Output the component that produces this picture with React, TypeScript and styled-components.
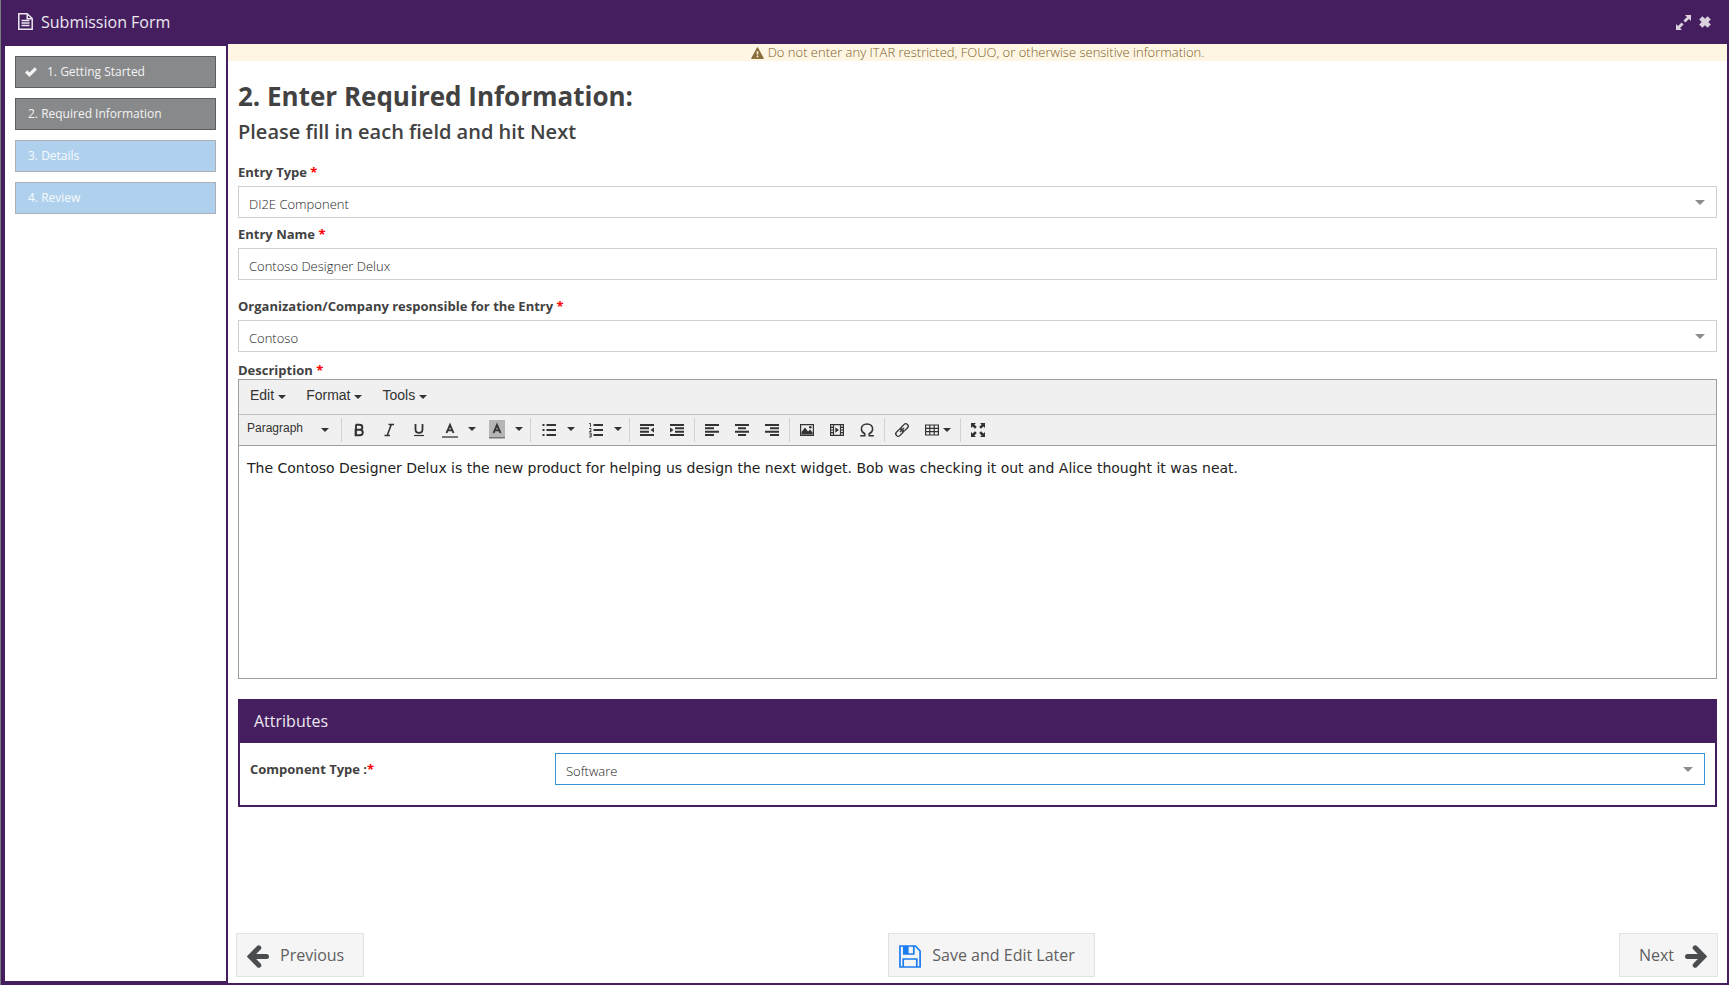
import React from "react";
import styled, { createGlobalStyle, css } from "styled-components";

const purple = "#451e5f";
const sans = '"Open Sans", "Liberation Sans", sans-serif';
const arial = '"Liberation Sans", sans-serif';

const GlobalStyle = createGlobalStyle`
  *, *::before, *::after { box-sizing: border-box; }
  body { margin: 0; background: #7c7c7e; font-family: ${sans}; font-size: 13px; color: #424242; }
  button, input, select, textarea { font: inherit; color: inherit; margin: 0; border-radius: 0; }
  button { cursor: pointer; }
  svg { display: block; flex: none; }
`;

const Window = styled.div`
  display: flex;
  flex-direction: column;
  min-height: 100vh;
  margin-left: 1px;
  background: #fff;
  border: 2px solid ${purple};
  border-top: 0;
`;

const TitleBar = styled.header`
  display: flex;
  align-items: center;
  gap: 8px;
  height: 44px;
  padding: 0 16px 0 15px;
  background: ${purple};
  color: #ece8ef;
`;

const Title = styled.h1`
  flex: 1;
  margin: 0;
  font-size: 16px;
  line-height: 22px;
  font-weight: 400;
`;

const ToolButton = styled.button`
  padding: 0;
  border: 0;
  background: none;
  color: #dad2df;
`;

const Body = styled.div`
  display: flex;
  flex: 1;
`;

const Sidebar = styled.nav`
  display: flex;
  flex-direction: column;
  flex: none;
  gap: 10px;
  width: 225px;
  padding: 10px;
  border: 2px solid ${purple};
`;

const StepButton = styled.button<{ $reached?: boolean; $done?: boolean }>`
  display: flex;
  align-items: center;
  gap: 10px;
  height: 32px;
  padding: 0 ${(p) => (p.$done ? 9 : 12)}px;
  border: 1px solid ${(p) => (p.$reached ? "#5d5e61" : "#aab0b6")};
  background: ${(p) => (p.$reached ? "#88898b" : "#afd1ee")};
  color: ${(p) => (p.$reached ? "#f3f3f3" : "#f7fafd")};
  font-size: 12px;
  line-height: 18px;
  text-align: left;
`;

const Main = styled.main`
  display: flex;
  flex: 1;
  flex-direction: column;
  min-width: 0;
`;

const Warning = styled.p`
  display: flex;
  align-items: center;
  justify-content: center;
  gap: 4px;
  margin: 0;
  background: #fef6e3;
  color: #7d5c2a;
  font-weight: 300;
  line-height: 17px;
`;

const Form = styled.form`
  flex: 1;
  padding: 17px 10px 20px;
`;

const Heading = styled.h2`
  margin: 0 0 4px;
  font-size: 26px;
  line-height: 36px;
  font-weight: 700;
`;

const SubHeading = styled.h3`
  margin: 0 0 18px;
  font-size: 20px;
  line-height: 27px;
  font-weight: 600;
`;

const Field = styled.div<{ $gap?: number; $after?: number }>`
  display: flex;
  flex-direction: column;
  gap: ${(p) => p.$gap ?? 5}px;
  margin-bottom: ${(p) => p.$after ?? 7}px;
`;

const Label = styled.label`
  font-weight: 700;
  line-height: 18px;
`;

const Star = styled.span`
  color: #f00;
`;

const control = css`
  width: 100%;
  height: 32px;
  padding: 4px 10px 0 10px;
  border: 1px solid #cfcfcf;
  background: #fff;
  color: #1c1c1c;
  font-weight: 300;
  outline: 0;
`;

const TextInput = styled.input`
  ${control}
`;

const SelectInput = styled.select<{ $focused?: boolean }>`
  ${control}
  grid-area: 1 / 1;
  appearance: none;
  border-color: ${(p) => (p.$focused ? "#3892d3" : "#cfcfcf")};
`;

const SelectWrap = styled.div`
  display: grid;
  flex: 1;
  align-items: center;

  svg {
    grid-area: 1 / 1;
    justify-self: end;
    margin-right: 12px;
    pointer-events: none;
  }
`;

const Editor = styled.div`
  display: flex;
  flex-direction: column;
  border: 1px solid #9e9e9e;
`;

const MenuBar = styled.div`
  display: flex;
  gap: 20px;
  height: 35px;
  padding: 6px 11px;
  border-bottom: 1px solid #c0c0c0;
  background: #f0f0f0;
  font-family: ${arial};
  font-size: 14px;
  line-height: 18px;
  color: #333;
`;

const MenuButton = styled.button`
  display: flex;
  align-items: center;
  gap: 4px;
  height: 18px;
  padding: 0;
  border: 0;
  background: none;

  svg {
    margin-top: 4px;
  }
`;

const Toolbar = styled.div`
  display: flex;
  align-items: center;
  height: 31px;
  border-bottom: 1px solid #9e9e9e;
  background: #f0f0f0;
  color: #333;
`;

const Group = styled.div`
  display: flex;
  align-items: center;
  height: 24px;
  padding: 0 2px;

  & + & {
    border-left: 1px solid #d2d2d2;
  }
`;

const FormatButton = styled.button`
  display: flex;
  align-items: center;
  justify-content: space-between;
  width: 98px;
  padding: 0 10px 0 6px;
  border: 0;
  background: none;
  font-family: ${arial};
  font-size: 12px;
  line-height: 16px;

  span {
    padding-bottom: 4px;
  }
`;

const IconButton = styled.button<{ $width?: number }>`
  display: flex;
  align-items: center;
  gap: 3px;
  width: ${(p) => p.$width ?? 30}px;
  height: 24px;
  padding: 0 0 0 7px;
  border: 0;
  background: none;
`;

const SplitButton = styled.span`
  display: flex;

  ${IconButton} {
    width: 31px;
    padding-left: 8px;
  }
`;

const OpenButton = styled.button`
  display: flex;
  align-items: center;
  justify-content: center;
  width: 16px;
  height: 24px;
  padding: 0 2px 2px 0;
  border: 0;
  background: none;
`;

const TextArea = styled.textarea`
  display: block;
  width: 100%;
  height: 232px;
  padding: 12px 8px;
  border: 0;
  outline: 0;
  resize: none;
  background: #fff;
  color: #222;
  font-family: "DejaVu Sans", sans-serif;
  font-size: 14px;
  line-height: 20px;
`;

const Panel = styled.section`
  margin-top: 20px;
  border: 2px solid ${purple};
`;

const PanelTitle = styled.h4`
  margin: 0;
  padding: 9px 14px 11px;
  background: ${purple};
  color: #ece8ef;
  font-size: 16px;
  line-height: 22px;
  font-weight: 400;
`;

const PanelRow = styled.div`
  display: flex;
  align-items: center;
  padding: 10px 10px 20px;

  label {
    width: 305px;
  }
`;

const Footer = styled.footer`
  display: flex;
  justify-content: space-between;
  padding: 0 9px 6px 8px;
`;

const NavButton = styled.button<{ $end?: boolean }>`
  display: flex;
  align-items: center;
  gap: 11px;
  height: 44px;
  padding: ${(p) => (p.$end ? "0 10px 0 19px" : "0 19px 0 10px")};
  border: 1px solid #e2e2e2;
  background: #f5f5f5;
  color: #606060;
  font-size: 16px;
  line-height: 22px;

  svg {
    margin-top: 2px;
  }
`;

const Caret = () => (
  <svg width="8" height="4" viewBox="0 0 8 4"><path d="M0 0h8L4 4z" fill="#333" /></svg>
);

const FieldArrow = () => (
  <svg width="10" height="5" viewBox="0 0 10 5"><path d="M0 0h10L5 5z" fill="#8c8c8c" /></svg>
);

const FileIcon = () => (
  <svg width="15" height="18" viewBox="0 0 15 18" fill="none" stroke="currentColor" strokeWidth="1.5">
    <path d="M.8.8h8.400l5 4.700v10.700H.8zM9.200.8v4.900h5" />
    <path d="M3.500 7.500h8M3.500 10h8M3.500 12.500h8" strokeWidth="1.300" />
  </svg>
);

const ExpandIcon = () => (
  <svg width="15" height="15" viewBox="0 0 15 15" fill="currentColor">
    <path d="M9 0h6v6l-2-2-3.600 3.600-2-2L11 2zM0 15V9l2 2 3.600-3.600 2 2L4 13l2 2z" />
  </svg>
);

const CloseIcon = () => (
  <svg width="12" height="12" viewBox="0 0 12 12" stroke="currentColor" strokeWidth="4.600">
    <path d="M1.800 1.800l8.400 8.400M10.200 1.800l-8.400 8.400" />
  </svg>
);

const CheckIcon = () => (
  <svg width="12" height="10" viewBox="0 0 12 10" fill="none" stroke="currentColor" strokeWidth="3.200">
    <path d="M1.100 4.500l3.400 3.200 6.400-6.400" />
  </svg>
);

const WarningIcon = () => (
  <svg width="13" height="12" viewBox="0 0 13 12">
    <path d="M6.500.6L12.400 11.400H.6z" fill="#8a6d3b" stroke="#8a6d3b" strokeLinejoin="round" />
    <path d="M6.500 4.200v3.200M6.500 8.500v1.700" stroke="#fef6e3" strokeWidth="1.600" />
  </svg>
);

const ArrowIcon = ({ right }: { right?: boolean }) => (
  <svg width="22" height="23" viewBox="0 0 22 23" fill="none" stroke="#4a4d4f" strokeWidth="5" strokeLinecap="round">
    <g transform={right ? "translate(22 0) scale(-1 1)" : undefined}>
      <path d="M11.800 2.800L3.300 11.500l8.500 8.700" strokeLinejoin="miter" />
      <path d="M4 11.500h15.500" />
      <path d="M4 11.500l4-4v8z" fill="#4a4d4f" strokeWidth="1" />
    </g>
  </svg>
);

const SaveIcon = () => (
  <svg width="22" height="23" viewBox="0 0 22 23" fill="none" stroke="#1a7cf0" strokeWidth="1.700">
    <path d="M1 1h15.500l4.600 5v16H1zM4.200 22v-8h13.600v8" />
    <path d="M4.800 1v8h10V1" />
    <path d="M5 1h4.600v8H5z" fill="#1a7cf0" stroke="none" />
  </svg>
);

const glyphs: Record<string, React.ReactNode> = {
  bold: <path d="M4.600 2.800h3.800c1.800 0 3 .9 3 2.500S10.200 7.800 8.400 7.800H4.600M4.600 7.800h4.200c1.800 0 3 .9 3 2.700s-1.200 2.700-3 2.700H4.600zM5 2.800v10.400" strokeWidth="1.900" />,
  italic: <path d="M7.500 2.500H13M3.500 13.500H9M10.300 2.500L6.200 13.500" strokeWidth="1.600" />,
  underline: <><path d="M4.500 2v5.500c0 2 1.300 3.300 3.500 3.300s3.500-1.300 3.500-3.300V2" strokeWidth="1.800" /><path d="M3 13.500h10" strokeWidth="1.200" /></>,
  color: <><path d="M4.500 11L8 2.800 11.500 11M5.600 8.400h4.800" strokeWidth="1.900" /><path d="M0 15h16" stroke="#777" strokeWidth="2" /></>,
  highlight: <><path d="M0-2h16v16H0z" fill="#b5b5b5" stroke="none" /><path d="M4.500 11L8 2.800 11.500 11M5.600 8.400h4.800" strokeWidth="1.900" /><path d="M0 15.500h16" stroke="#777" strokeWidth="2" /></>,
  bullets: <><path d="M5.500 3H15M5.500 8H15M5.500 13H15" strokeWidth="2" /><path d="M1.500 3h2M1.500 8h2M1.500 13h2" strokeWidth="2" /></>,
  numbers: <><path d="M5.500 3H15M5.500 8H15M5.500 13H15" strokeWidth="2" /><path d="M1 1.500h1.500V5M1 6.500h2v1.600L1.500 9.500H3.500M1 11h2.200v4H1M1.500 13h1.700" strokeWidth=".9" /></>,
  outdent: <><path d="M1 3h14M1 6.300h9M1 9.700h9M1 13h14" strokeWidth="2" /><path d="M15 5.500v5L11.500 8z" fill="#333" stroke="none" /></>,
  indent: <><path d="M1 3h14M6 6.300h9M6 9.700h9M1 13h14" strokeWidth="2" /><path d="M1 5.500v5L4.500 8z" fill="#333" stroke="none" /></>,
  left: <path d="M1 3h14M1 6.300h9M1 9.700h14M1 13h9" strokeWidth="2" />,
  center: <path d="M1 3h14M4 6.300h8M1 9.700h14M4 13h8" strokeWidth="2" />,
  right: <path d="M1 3h14M6 6.300h9M1 9.700h14M6 13h9" strokeWidth="2" />,
  image: <><path d="M1.600 2.600h12.800v10.800H1.600z" strokeWidth="1.200" /><path d="M2.500 12.500V10L6 5.500l3 4 2-2 2.600 3v2z" fill="#333" stroke="none" /><circle cx="11.300" cy="5.300" r="1.300" fill="#333" stroke="none" /></>,
  media: <><path d="M1.600 2.600h12.800v10.800H1.600zM4.500 2.600v10.800M11.500 2.600v10.800M1.600 5.300h2.900M1.600 8h2.900M1.600 10.700h2.900M11.500 5.300h2.900M11.500 8h2.900M11.500 10.700h2.900" strokeWidth="1.200" /><path d="M6.300 5.200v5.600L10 8z" fill="#333" stroke="none" /></>,
  omega: <path d="M1.200 13.800h4.600v-2C3.500 10.700 2.400 9 2.400 7c0-3 2.300-5 5.600-5s5.600 2 5.600 5c0 2-1.100 3.700-3.400 4.800v2h4.600" strokeWidth="1.500" />,
  link: <g transform="rotate(-45 8 8)" strokeWidth="1.300"><rect x=".3" y="5.600" width="8.400" height="4.800" rx="2.200" /><rect x="7.300" y="5.600" width="8.400" height="4.800" rx="2.200" /><path d="M5 8h6" /></g>,
  table: <path d="M1.600 3h12.800v10H1.600zM1.600 6.300h12.800M1.600 9.600h12.800M5.800 3v10M10.200 3v10" strokeWidth="1.200" />,
  fullscreen: <path d="M1 1h5L4.400 2.600l2.400 2.400-1.800 1.800L2.600 4.400 1 6zM15 1v5l-1.600-1.600L11 6.800 9.200 5l2.400-2.400L10 1zM1 15v-5l1.600 1.600L5 9.200 6.800 11l-2.400 2.400L6 15zM15 15h-5l1.600-1.600L9.200 11 11 9.200l2.400 2.400L15 10z" fill="#333" stroke="none" />,
};

const Glyph = ({ name }: { name: string }) => (
  <svg width="16" height="16" viewBox="0 0 16 16" fill="none" stroke="#333" overflow="visible">{glyphs[name]}</svg>
);

type Tool = { icon: string; label: string; split?: boolean; menu?: boolean };

const toolGroups: Tool[][] = [
  [
    { icon: "bold", label: "Bold" },
    { icon: "italic", label: "Italic" },
    { icon: "underline", label: "Underline" },
    { icon: "color", label: "Text color", split: true },
    { icon: "highlight", label: "Background color", split: true },
  ],
  [
    { icon: "bullets", label: "Bullet list", split: true },
    { icon: "numbers", label: "Numbered list", split: true },
  ],
  [
    { icon: "outdent", label: "Decrease indent" },
    { icon: "indent", label: "Increase indent" },
  ],
  [
    { icon: "left", label: "Align left" },
    { icon: "center", label: "Align center" },
    { icon: "right", label: "Align right" },
  ],
  [
    { icon: "image", label: "Insert image" },
    { icon: "media", label: "Insert video" },
    { icon: "omega", label: "Special character" },
  ],
  [
    { icon: "link", label: "Insert link" },
    { icon: "table", label: "Table", menu: true },
  ],
  [{ icon: "fullscreen", label: "Fullscreen" }],
];

const steps = [
  { text: "1. Getting Started", reached: true, done: true },
  { text: "2. Required Information", reached: true },
  { text: "3. Details" },
  { text: "4. Review" },
];

const SelectField = ({ id, value, focused }: { id: string; value: string; focused?: boolean }) => (
  <SelectWrap>
    <SelectInput id={id} $focused={focused} defaultValue={value}>
      <option>{value}</option>
    </SelectInput>
    <FieldArrow />
  </SelectWrap>
);

const ToolItem = ({ tool }: { tool: Tool }) => {
  const button = (
    <IconButton type="button" aria-label={tool.label} $width={tool.menu ? 41 : 30}>
      <Glyph name={tool.icon} />
      {tool.menu && <Caret />}
    </IconButton>
  );
  if (!tool.split) return button;
  return (
    <SplitButton>
      {button}
      <OpenButton type="button" aria-label={`${tool.label} options`}><Caret /></OpenButton>
    </SplitButton>
  );
};

export default function App() {
  return (
    <>
      <GlobalStyle />
      <Window>
        <TitleBar>
          <FileIcon />
          <Title>Submission Form</Title>
          <ToolButton type="button" aria-label="Maximize"><ExpandIcon /></ToolButton>
          <ToolButton type="button" aria-label="Close"><CloseIcon /></ToolButton>
        </TitleBar>
        <Body>
          <Sidebar aria-label="Steps">
            {steps.map((s) => (
              <StepButton key={s.text} type="button" $reached={s.reached} $done={s.done}>
                {s.done && <CheckIcon />}
                <span>{s.text}</span>
              </StepButton>
            ))}
          </Sidebar>
          <Main>
            <Warning>
              <WarningIcon />
              Do not enter any ITAR restricted, FOUO, or otherwise sensitive information.
            </Warning>
            <Form>
              <Heading>2. Enter Required Information:</Heading>
              <SubHeading>Please fill in each field and hit Next</SubHeading>
              <Field>
                <Label htmlFor="entry-type">Entry Type <Star>*</Star></Label>
                <SelectField id="entry-type" value="DI2E Component" />
              </Field>
              <Field $after={17}>
                <Label htmlFor="entry-name">Entry Name <Star>*</Star></Label>
                <TextInput id="entry-name" defaultValue="Contoso Designer Delux" />
              </Field>
              <Field $after={9}>
                <Label htmlFor="organization">Organization/Company responsible for the Entry <Star>*</Star></Label>
                <SelectField id="organization" value="Contoso" />
              </Field>
              <Field $gap={0} $after={0}>
                <Label htmlFor="description">Description <Star>*</Star></Label>
                <Editor>
                  <MenuBar>
                    {["Edit", "Format", "Tools"].map((m) => (
                      <MenuButton key={m} type="button">{m}<Caret /></MenuButton>
                    ))}
                  </MenuBar>
                  <Toolbar>
                    <Group>
                      <FormatButton type="button"><span>Paragraph</span><Caret /></FormatButton>
                    </Group>
                    {toolGroups.map((group) => (
                      <Group key={group[0].icon}>
                        {group.map((t) => <ToolItem key={t.icon} tool={t} />)}
                      </Group>
                    ))}
                  </Toolbar>
                  <TextArea
                    id="description"
                    spellCheck={false}
                    defaultValue="The Contoso Designer Delux is the new product for helping us design the next widget. Bob was checking it out and Alice thought it was neat."
                  />
                </Editor>
              </Field>
              <Panel>
                <PanelTitle>Attributes</PanelTitle>
                <PanelRow>
                  <Label htmlFor="component-type">Component Type :<Star>*</Star></Label>
                  <SelectField id="component-type" value="Software" focused />
                </PanelRow>
              </Panel>
            </Form>
            <Footer>
              <NavButton type="button"><ArrowIcon />Previous</NavButton>
              <NavButton type="button"><SaveIcon />Save and Edit Later</NavButton>
              <NavButton type="button" $end>Next<ArrowIcon right /></NavButton>
            </Footer>
          </Main>
        </Body>
      </Window>
    </>
  );
}
